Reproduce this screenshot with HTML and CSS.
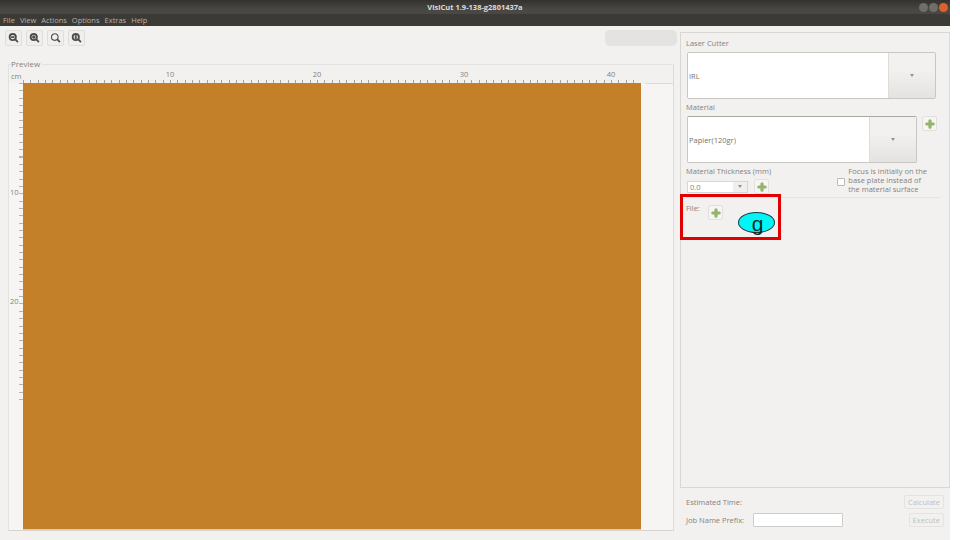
FILE: index.html
```html
<!DOCTYPE html>
<html lang="en">
<head>
    <meta charset="UTF-8">
    <title>VisiCut 1.9-138-g2801437a</title>
    <link rel="stylesheet" href="styles.css">
</head>
<body>
    <div class="finestra">
        <div class="titolo">
            <span class="titolo-testo">VisiCut 1.9-138-g2801437a</span>
            <div class="controlli">
                <span class="pallino"></span>
                <span class="pallino"></span>
                <span class="pallino chiudi"></span>
            </div>
        </div>
        <div class="menu">
            <span>File</span><span>View</span><span>Actions</span><span>Options</span><span>Extras</span><span>Help</span>
        </div>

        <div class="contenuto">
            <div class="sinistra">
                <div class="barra">
                    <button class="bottone-zoom"><svg viewBox="0 0 12 12"><circle cx="5.2" cy="5" r="3.4"/><path d="M3.4 5h3.6M8 7.6l2.8 2.8"/></svg></button>
                    <button class="bottone-zoom"><svg viewBox="0 0 12 12"><circle cx="5.2" cy="5" r="3.4"/><path d="M3.4 5h3.6M5.2 3.2v3.6M8 7.6l2.8 2.8"/></svg></button>
                    <button class="bottone-zoom"><svg viewBox="0 0 12 12"><circle class="sottile" cx="5.2" cy="5" r="3.6"/><path d="M8 7.6l2.8 2.8"/></svg></button>
                    <button class="bottone-zoom"><svg viewBox="0 0 12 12"><circle cx="5.2" cy="5" r="3.4"/><path d="M5.2 3v4M8 7.6l2.8 2.8"/></svg></button>
                    <div class="progresso"></div>
                </div>

                <div class="preview">
                    <div class="preview-titolo"><span>Preview</span></div>
                    <div class="righello-alto">
                        <span class="cm">cm</span>
                        <div class="tacche-alto">
                            <span class="num-alto n10">10</span>
                            <span class="num-alto n20">20</span>
                            <span class="num-alto n30">30</span>
                            <span class="num-alto n40">40</span>
                        </div>
                    </div>
                    <div class="area">
                        <div class="righello-lato">
                            <span class="num-lato v10">10</span>
                            <span class="num-lato v20">20</span>
                        </div>
                        <div class="foglio"></div>
                        <div class="margine"></div>
                    </div>
                </div>
            </div>

            <div class="destra">
                <div class="pannello">
                    <div class="etichetta">Laser Cutter</div>
                    <div class="combo combo-laser">
                        <div class="combo-testo">IRL</div>
                        <div class="combo-freccia"><span class="freccia"></span></div>
                    </div>

                    <div class="etichetta etichetta-materiale">Material</div>
                    <div class="riga-materiale">
                        <div class="combo combo-materiale">
                            <div class="combo-testo">Papier(120gr)</div>
                            <div class="combo-freccia"><span class="freccia"></span></div>
                        </div>
                        <button class="bottone-piu"><svg viewBox="0 0 12 12"><path d="M6 2.8v6.4M2.8 6h6.4"/></svg></button>
                    </div>

                    <div class="riga-spessore">
                        <div>
                            <div class="etichetta">Material Thickness (mm)</div>
                            <div class="spessore-campi">
                                <div class="piccola-combo">
                                    <span class="piccola-testo">0.0</span>
                                    <span class="piccola-freccia"><span class="freccia"></span></span>
                                </div>
                                <button class="bottone-piu"><svg viewBox="0 0 12 12"><path d="M6 2.8v6.4M2.8 6h6.4"/></svg></button>
                            </div>
                        </div>
                        <div class="fuoco">
                            <span class="casella"></span>
                            <span class="fuoco-testo">Focus is initially on the<br>base plate instead of<br>the material surface</span>
                        </div>
                    </div>

                    <div class="riga-file">
                        <span class="etichetta etichetta-file">File:</span>
                        <button class="bottone-piu"><svg viewBox="0 0 12 12"><path d="M6 2.8v6.4M2.8 6h6.4"/></svg></button>
                        <div class="evidenza"><span class="ovale">g</span></div>
                    </div>
                </div>

                <div class="piede">
                    <div class="piede-riga">
                        <span>Estimated Time:</span>
                        <button class="bottone-spento">Calculate</button>
                    </div>
                    <div class="piede-riga">
                        <span class="prefisso">Job Name Prefix:</span>
                        <span class="campo-prefisso"></span>
                        <button class="bottone-spento">Execute</button>
                    </div>
                </div>
            </div>
        </div>
    </div>
</body>
</html>
```

FILE: styles.css
```css
html, body {
    margin: 0;
    height: 100%;
    background-color: #fff;
}

body {
    font-family: "Open Sans", sans-serif;
    font-size: 7.5px;
    color: #85827d;
    overflow: hidden;
}

.finestra {
    width: 950px;
    height: 540px;
    display: flex;
    flex-direction: column;
    background-color: #f2f1f0;
}

.titolo {
    height: 14px;
    flex: none;
    display: flex;
    align-items: center;
    justify-content: center;
    position: relative;
    background: linear-gradient(#33322e, #4a4844 70%);
}

.titolo-testo {
    color: #dfdbd2;
    font-weight: 700;
    font-size: 7.5px;
}

.controlli {
    position: absolute;
    right: 2px;
    top: 3px;
    display: flex;
    gap: 1px;
}

.pallino {
    width: 9px;
    height: 9px;
    border-radius: 50%;
    background-color: #6f6e69;
}

.chiudi {
    background-color: #e0602c;
}

.menu {
    height: 12px;
    flex: none;
    display: flex;
    gap: 5px;
    align-items: center;
    padding-left: 3px;
    background-color: #3b3a36;
    color: #b5b2ac;
}

.contenuto {
    flex: 1;
    display: flex;
    min-height: 0;
}

.sinistra {
    width: 680px;
    flex: none;
    display: flex;
    flex-direction: column;
}

.barra {
    height: 24px;
    flex: none;
    display: flex;
    align-items: center;
    gap: 4px;
    padding: 0 3px 0 5px;
}

.bottone-zoom {
    width: 17px;
    height: 16px;
    padding: 2px;
    border: 1px solid #e0ded9;
    border-radius: 2px;
    background-color: #f0efed;
    display: flex;
    align-items: center;
    justify-content: center;
}

.bottone-zoom svg {
    width: 12px;
    height: 12px;
    fill: none;
    stroke: #4f4d49;
    stroke-width: 2;
}

.bottone-zoom .sottile {
    stroke-width: 1.2;
}

.progresso {
    width: 72px;
    height: 16px;
    margin-left: auto;
    background-color: #e4e3e1;
    border-radius: 5px;
}

.preview {
    flex: 1;
    margin: 14px 6px 9px 8px;
    display: flex;
    flex-direction: column;
    min-height: 0;
    border-left: 1px solid #e3e2df;
    border-right: 1px solid #dcdbd8;
    border-bottom: 1px solid #d5d4d1;
}

.preview-titolo {
    height: 7px;
    border-top: 1px solid #e3e2df;
    margin-left: -1px;
    margin-right: -1px;
    position: relative;
}

.preview-titolo span {
    position: absolute;
    left: 3px;
    top: -7px;
    padding: 0 2px 0 0;
    font-size: 8px;
    background-color: #f2f1f0;
}

.righello-alto {
    height: 11px;
    flex: none;
    display: flex;
    align-items: flex-end;
}

.cm {
    width: 14px;
    flex: none;
    align-self: flex-start;
    line-height: 9px;
    margin-left: 2px;
    margin-right: -2px;
}

.tacche-alto {
    flex: 1;
    height: 11px;
    margin-right: 37px;
    position: relative;
    background-image:
        repeating-linear-gradient(to right, #a5a39f 0, #a5a39f 1px, transparent 1px, transparent 7.35px);
    background-size: 100% 3px;
    background-position: left bottom;
    background-repeat: no-repeat;
}

.num-alto {
    position: absolute;
    top: -3px;
    transform: translateX(-50%);
}

.n10 { left: 147px; }
.n20 { left: 294px; }
.n30 { left: 441px; }
.n40 { left: 588px; }

.area {
    flex: 1;
    display: flex;
    min-height: 0;
    background-color: #f6f5f4;
}

.righello-lato {
    width: 14px;
    flex: none;
    position: relative;
    height: 323px;
    background-image:
        repeating-linear-gradient(to bottom, #b5b3af 0, #b5b3af 1px, transparent 1px, transparent 7.35px);
    background-size: 4px 100%;
    background-position: right top;
    background-repeat: no-repeat;
}

.num-lato {
    position: absolute;
    left: 1px;
    line-height: 8px;
    transform: translateY(-50%);
}

.v10 { top: 109px; }
.v20 { top: 218px; }

.foglio {
    width: 618px;
    flex: none;
    background-color: #c38028;
    border-bottom: 1px solid #e9c9a0;
}

.margine {
    flex: 1;
    margin-left: 4px;
    border-top: 1px solid #dcdbd8;
}

.destra {
    flex: 1;
    display: flex;
    flex-direction: column;
    min-width: 0;
    padding-top: 6px;
}

.pannello {
    height: 456px;
    flex: none;
    border: 1px solid #d8d7d3;
    border-right-color: #dcdbd8;
    padding: 5px 8px 0 5px;
    box-sizing: border-box;
}

.etichetta {
    line-height: 10px;
}

.combo {
    display: flex;
    background-color: #fff;
    border: 1px solid #c9c7c3;
    box-sizing: border-box;
    border-radius: 2px;
}

.combo-laser {
    height: 47px;
    width: 249px;
    margin-top: 4px;
    margin-left: 1px;
}

.combo-testo {
    flex: 1;
    display: flex;
    align-items: center;
    padding-left: 1px;
    color: #77746f;
}

.combo-freccia {
    width: 46px;
    flex: none;
    display: flex;
    align-items: center;
    justify-content: center;
    background: linear-gradient(#f2f1f0 35%, #e4e3e0);
    border-left: 1px solid #dddcd9;
}

.freccia {
    width: 0;
    height: 0;
    border-left: 2px solid transparent;
    border-right: 2px solid transparent;
    border-top: 3px solid #93918c;
}

.etichetta-materiale {
    margin-top: 3px;
}

.riga-materiale {
    display: flex;
    gap: 5px;
    margin-top: 4px;
    margin-left: 1px;
}

.combo-materiale {
    width: 230px;
    height: 47px;
    border-top-color: #a9a7a3;
}

.bottone-piu {
    width: 15px;
    height: 15px;
    padding: 0;
    flex: none;
    border: 1px solid #e2e0dc;
    border-radius: 2px;
    background-color: #f6f5f3;
    display: flex;
    align-items: center;
    justify-content: center;
}

.bottone-piu svg {
    width: 12px;
    height: 12px;
    fill: none;
    stroke: #93b46a;
    stroke-width: 3.2;
    stroke-linecap: round;
}

.riga-spessore {
    display: flex;
    justify-content: space-between;
    padding-bottom: 3px;
    margin-top: 3px;
    border-bottom: 1px solid #e6e5e2;
}

.spessore-campi {
    display: flex;
    gap: 6px;
    align-items: center;
    margin-top: 3px;
    margin-left: 1px;
}

.piccola-combo {
    width: 61px;
    height: 12px;
    display: flex;
    background-color: #fff;
    border: 1px solid #d8d6d2;
    box-sizing: border-box;
}

.piccola-testo {
    flex: 1;
    line-height: 10px;
    padding-left: 2px;
}

.piccola-freccia {
    width: 14px;
    display: flex;
    align-items: center;
    justify-content: center;
    background-color: #f0efed;
}

.fuoco {
    display: flex;
    align-items: center;
    gap: 3px;
    margin-right: 14px;
}

.casella {
    width: 6px;
    height: 6px;
    background-color: #fff;
    border: 1px solid #bbb9b5;
    border-radius: 1px;
    margin-top: 3px;
}

.fuoco-testo {
    line-height: 9px;
}

.riga-file {
    display: flex;
    align-items: flex-start;
    margin-top: 5px;
    position: relative;
}

.etichetta-file {
    width: 22px;
}

.riga-file .bottone-piu {
    margin-top: 2px;
}

.evidenza {
    position: absolute;
    left: -6px;
    top: -9px;
    width: 101px;
    height: 46px;
    box-sizing: border-box;
    border: 3px solid #e00000;
}

.ovale {
    position: absolute;
    left: 55px;
    top: 15px;
    width: 37px;
    height: 21px;
    padding-left: 2px;
    box-sizing: border-box;
    border: 1px solid #173b44;
    border-radius: 50%;
    background-color: #00f6f6;
    color: #12262c;
    font-family: "Liberation Sans", Arial, sans-serif;
    font-size: 21px;
    line-height: 21px;
    text-align: center;
}

.piede {
    flex: 1;
    padding: 6px 6px 0 6px;
}

.piede-riga {
    display: flex;
    align-items: center;
    height: 16px;
    margin-bottom: 2px;
    justify-content: space-between;
}

.prefisso {
    width: 67px;
    flex: none;
}

.campo-prefisso {
    width: 90px;
    height: 14px;
    box-sizing: border-box;
    background-color: #fff;
    border: 1px solid #cfcdc9;
    border-radius: 1px;
    margin-right: auto;
}

.bottone-spento {
    height: 14px;
    padding: 0 3px;
    font-family: inherit;
    font-size: 7.5px;
    color: #c0bfbb;
    background-color: #f2f1f0;
    border: 1px solid #e4e3e0;
    border-radius: 2px;
}
```
